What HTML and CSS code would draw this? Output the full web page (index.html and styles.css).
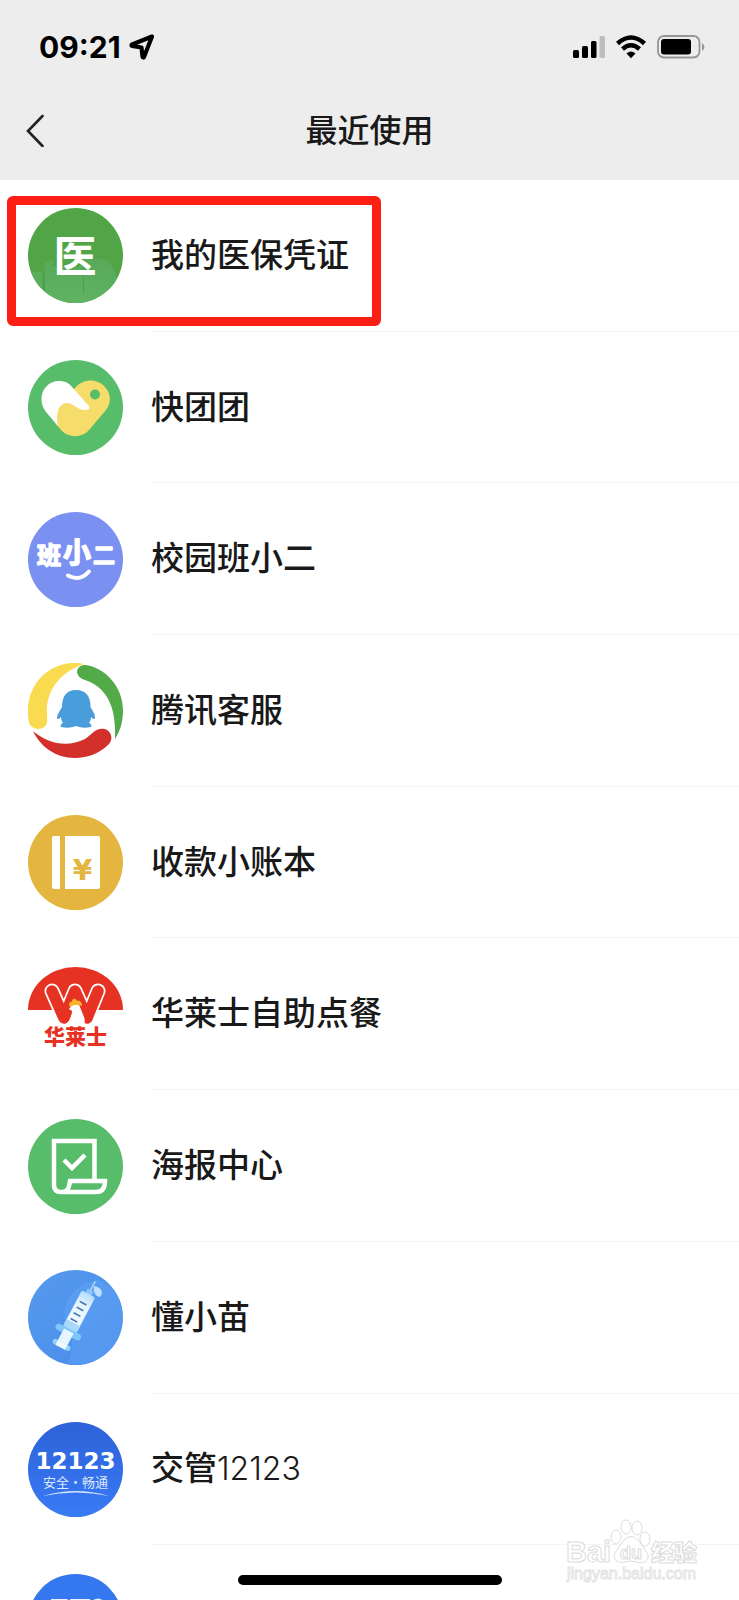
FILE: index.html
```html
<!DOCTYPE html>
<html lang="zh-CN">
<head>
<meta charset="utf-8">
<meta name="viewport" content="width=device-width, initial-scale=1">
<title>最近使用</title>
<link rel="stylesheet" href="styles.css">
</head>
<body>
<div class="screen">
  <header class="top">
    <div class="status">
      <div class="status-left">
        <span class="time">09:21</span>
        <svg class="location" width="26" height="26" viewBox="0 0 26 26" aria-hidden="true"><path d="M23 2.500 3 10.500c-.8.400-.7 1.300.1 1.400l9.400 1.600 1 9.300c.1.900 1.200 1 1.500.2z" fill="none" stroke="#000" stroke-width="4.200" stroke-linejoin="round"/></svg>
      </div>
      <div class="status-right">
        <svg width="32" height="24" viewBox="0 0 32 24" aria-hidden="true"><rect y="15" width="6" height="8" rx="1.500"/><rect x="9" y="11" width="6" height="12" rx="1.500"/><rect x="18" y="6" width="5.500" height="17" rx="1.500"/><rect x="26.500" y="1" width="5.500" height="22" rx="1.500" fill="#bdbdbd"/></svg>
        <svg width="30" height="24" viewBox="0 0 30 24" aria-hidden="true"><g fill="none" stroke="#000" stroke-width="4.500"><path d="M1.500 8.500Q15-3.500 28.500 8.500"/><path d="M6.500 14Q15 6.500 23.500 14"/></g><path d="M10.500 18.500q4.500-4 9 0L15 23.200z"/></svg>
        <svg width="48" height="24" viewBox="0 0 48 24" aria-hidden="true"><rect x="1" y="1" width="41.500" height="21.500" rx="6" fill="none" stroke="#969696" stroke-width="1.800"/><rect x="4" y="4" width="30" height="15.500" rx="3"/><path d="M45 8q5 4 0 8z" fill="#969696"/></svg>
      </div>
    </div>
    <div class="nav">
      <button class="back" type="button" aria-label="返回"><svg width="18" height="34" viewBox="0 0 18 34" aria-hidden="true"><path d="M16.500 3 2 18 16.500 33" fill="none" stroke="#222" stroke-width="2.600" stroke-linecap="round"/></svg></button>
      <h1 class="title">最近使用</h1>
    </div>
  </header>

  <main class="content">
    <ul class="list">
      <li class="row">
        <a class="link" href="#insurance">
          <svg class="icon" viewBox="0 0 95 95" aria-hidden="true">
            <defs><linearGradient id="med" x2="0" y2="1"><stop offset="0" stop-color="#58a95a"/><stop offset="1" stop-color="#5fb361"/></linearGradient><clipPath id="disc"><circle cx="47.500" cy="47.500" r="47.500"/></clipPath></defs>
            <g clip-path="url(#disc)"><rect width="95" height="95" fill="#52a547"/><path d="M0 64h14v18h3V55l8-3v6h31v-7h18l6 2 8 12v30H0z" fill="url(#med)"/><path d="M55.500 57v28M16 66v19" stroke="#4d9f4d"/></g>
            <text class="cjk bold" x="47" y="64" font-size="43" text-anchor="middle" fill="#fff">医</text>
          </svg>
          <span class="name">我的医保凭证</span>
        </a>
        <span class="highlight"></span>
      </li>
      <li class="row">
        <a class="link" href="#ktt">
          <svg class="icon" viewBox="0 0 95 95" aria-hidden="true">
            <circle cx="47.500" cy="47.500" r="47.500" fill="#57bd6a"/>
            <path d="M47 28C54 19 67 18 75 25c8 7 9 17 3 25L61 70c-7 8-20 8-27 1l-7-8 3-20z" fill="#f6dc6b"/>
            <path d="M13.500 40C13 29 21 21 31 21c6 0 10 2 13 6l16 18c3 3 1 5-3 5-9 0-12-8-19-7-7 1-11 10-8 23L18 52c-3-4-4.500-8-4.500-12z" fill="#fff"/>
            <circle cx="67" cy="34.500" r="5" fill="#57bd6a"/>
          </svg>
          <span class="name">快团团</span>
        </a>
      </li>
      <li class="row">
        <a class="link" href="#class">
          <svg class="icon" viewBox="0 0 95 95" aria-hidden="true">
            <circle cx="47.500" cy="47.500" r="47.500" fill="#7b91f2"/>
            <g class="cjk bold" fill="#fff" stroke="#fff" stroke-width="1.500" stroke-linejoin="round" text-anchor="middle"><text x="21" y="52" font-size="24">班</text><text x="49" y="51" font-size="28">小</text><text x="76" y="51" font-size="22">二</text></g>
            <path d="M40 63.500Q52 70 61 59.500" fill="none" stroke="#fff" stroke-width="4" stroke-linecap="round"/>
          </svg>
          <span class="name">校园班小二</span>
        </a>
      </li>
      <li class="row">
        <a class="link" href="#tencent">
          <svg class="icon" viewBox="0 0 95 95" aria-hidden="true">
            <path d="M56 1C28-5 0 16 0 47.500c0 4 0 8 1 12 2 8 16 9 18 0 .5-5-.5-10 0-15C20 27 32 9 56 1z" fill="#fadb50"/>
            <path d="M57 2c20 2 38 22 38 45 0 10-2 20-8 29 1-26-4-50-30-59C45 13 48 2 57 2z" fill="#52aa49"/>
            <path d="M5 68c7 15 22 27 42 27 13 0 25-5 34-14 6-7 0-17-9-15-6 1-10 7-15 10-16 8-36 6-52-8z" fill="#d4302b"/>
            <path d="M48 27c10 0 15 7 14.500 17 2 4 5 7 4.500 12-2 0-3-1-4-2 0 3-1 4-2 6 2 1 3 2 2 4-5 1-10 1-15-1-5 2-10 2-15 1-1-2 0-3 2-4-1-2-2-3-2-6-1 1-2 2-4 2 0-5 3-8 5-12C34 34 38 27 48 27z" fill="#4a9ddb"/>
          </svg>
          <span class="name">腾讯客服</span>
        </a>
      </li>
      <li class="row">
        <a class="link" href="#ledger">
          <svg class="icon" viewBox="0 0 95 95" aria-hidden="true">
            <circle cx="47.500" cy="47.500" r="47.500" fill="#e4b63f"/>
            <path d="M26 21h6v53h-6q-2 0-2-2V23q0-2 2-2zM37 21h33q2 0 2 2v49q0 2-2 2H37z" fill="#fff"/>
            <text class="wide" x="54.500" y="65" font-size="28" text-anchor="middle" fill="#e4b63f">¥</text>
          </svg>
          <span class="name">收款小账本</span>
        </a>
      </li>
      <li class="row">
        <a class="link" href="#wallace">
          <svg class="icon" viewBox="0 0 95 95" aria-hidden="true">
            <path d="M0 43a47.500 43 0 0 1 95 0z" fill="#e63223"/>
            <g fill="none" stroke-linecap="round" stroke-linejoin="round"><path d="M24 24 36 51 47 24 59 51 70 24" stroke="#fff" stroke-width="15"/><path d="M24 24 36 51 47 24 59 51 70 24" stroke="#e63223" stroke-width="11.500"/></g>
            <path d="M44 38c3-3 7-2 8 2l4 10c1 3 1 5 0 7H38c4-3 6-8 6-13l-3-2z" fill="#fff"/>
            <path d="M41 38c0-3 2-4 3-3 0-4 4-4 5-1 3-1 5 1 5 5-4-1-8-2-12 1z" fill="#f6b52d"/>
            <text class="cjk heavy" x="47.500" y="77" font-size="21" text-anchor="middle" fill="#e63223">华莱士</text>
          </svg>
          <span class="name">华莱士自助点餐</span>
        </a>
      </li>
      <li class="row">
        <a class="link" href="#poster">
          <svg class="icon" viewBox="0 0 95 95" aria-hidden="true">
            <circle cx="47.500" cy="47.500" r="47.500" fill="#57bd6a"/>
            <g fill="none" stroke="#fff" stroke-width="4.500"><path d="M66.500 62V22H26v44c0 5 3 7 7 7h35c6 0 9-4 9-11H42c-1 7-2 11-9 11"/><path d="m36 41 8 8 13-13"/></g>
          </svg>
          <span class="name">海报中心</span>
        </a>
      </li>
      <li class="row">
        <a class="link" href="#vaccine">
          <svg class="icon" viewBox="0 0 95 95" aria-hidden="true">
            <defs><linearGradient id="sky" x2="1" y2="1"><stop offset="0" stop-color="#559aed"/><stop offset="1" stop-color="#498cec"/></linearGradient><linearGradient id="glass" x2="0" y2="1"><stop offset="0" stop-color="#b5dcfb"/><stop offset=".3" stop-color="#e3f3fe"/><stop offset="1" stop-color="#f4fbff"/></linearGradient></defs>
            <circle cx="47.500" cy="47.500" r="47.500" fill="url(#sky)"/>
            <path d="M70 10c-28 3-40 30-30 48 6 12 4 24 0 36 30 4 55-18 55-46 0-15-8-32-25-38z" fill="#6eaff7" opacity=".3"/>
            <g transform="translate(51 42) rotate(28) scale(1.080)">
              <path d="M0-20v-12" stroke="#a7d7fa" stroke-width="1.500"/><rect x="-3" y="-23" width="6" height="5" fill="#8bc6fa"/>
              <rect x="-7" y="-19" width="14" height="37" rx="2" fill="url(#glass)"/><path d="M-7 11H7v7H-7z" fill="#a8d8fb"/>
              <path d="M-4-9h7M-4-3h7M-4 3h7M-4 9h7" stroke="#4774a7" stroke-width="1.500"/>
              <rect x="-13" y="18" width="26" height="6" rx="3" fill="#7fc7fa"/><rect x="-5" y="20" width="10" height="15" fill="#e6f6ff"/><rect x="-9" y="32" width="18" height="5" rx="2.500" fill="#91d1fa"/><rect x="-5" y="32" width="10" height="5" fill="#effaff"/>
            </g>
            <path d="M66 16c7 1 10 6 6 11-5-1-7-5-6-11z" fill="#bfe0fc"/>
          </svg>
          <span class="name">懂小苗</span>
        </a>
      </li>
      <li class="row">
        <a class="link" href="#traffic">
          <svg class="icon" viewBox="0 0 95 95" aria-hidden="true">
            <defs><linearGradient id="blue" x2="0" y2="1"><stop offset="0" stop-color="#2d61d8"/><stop offset="1" stop-color="#387bf5"/></linearGradient></defs>
            <circle cx="47.500" cy="47.500" r="47.500" fill="url(#blue)"/>
            <text class="wide" x="47.500" y="47" font-size="23" text-anchor="middle" fill="#fff">12123</text>
            <text class="cjk" x="47.500" y="65" font-size="13" text-anchor="middle" fill="#dce8ff">安全·畅通</text>
            <path d="M15 74Q48 64 81 74 48 67 15 74z" fill="#cfe0ff"/>
          </svg>
          <span class="name">交管<span class="number">12123</span></span>
        </a>
      </li>
      <li class="row">
        <a class="link" href="#more" aria-label="更多小程序">
          <svg class="icon" viewBox="0 0 95 95" aria-hidden="true">
            <circle cx="47.500" cy="47.500" r="47.500" fill="#3477ef"/>
            <path d="M23 25h17l-3 4H23zM42 25h20v2H42zM64 27q6-5 12 0z" fill="#e8f1ff"/>
          </svg>
        </a>
      </li>
    </ul>
  </main>

  <div class="home"></div>
  <svg class="watermark" width="140" height="68" viewBox="0 0 140 68" aria-hidden="true">
    <g fill="#fff" stroke="#dcdcdc" stroke-width="1">
      <text class="latin" x="3" y="44" font-size="29">Bai</text>
      <ellipse cx="53" cy="19" rx="5" ry="7"/><ellipse cx="63" cy="9" rx="5" ry="7"/><ellipse cx="74" cy="10" rx="5" ry="7"/><ellipse cx="82" cy="21" rx="5" ry="7"/>
      <path d="M61 22q7-7 14 0l7 10c8 9-1 15-8 12q-6-2-12 0c-8 2-15-4-8-12z"/>
      <text class="latin" x="68" y="41" font-size="18" text-anchor="middle">du</text>
      <text class="cjk heavy" x="88" y="43" font-size="23">经验</text>
      <text class="url" x="4" y="61" font-size="16">jingyan.baidu.com</text>
    </g>
  </svg>
</div>
</body>
</html>
```

FILE: styles.css
```css
* {
  box-sizing: border-box;
}

body {
  margin: 0;
  background: #fff;
  color: #191919;
  font-family: Inter, "Noto Sans CJK SC", sans-serif;
}

.screen {
  position: relative;
  display: flex;
  flex-direction: column;
  height: 100vh;
  overflow: hidden;
}

.top {
  flex: none;
  background: #ededed;
}

.status {
  display: flex;
  align-items: center;
  justify-content: space-between;
  height: 80px;
  padding: 14px 34px 0 39px;
}

.status-left {
  display: flex;
  align-items: center;
  gap: 8px;
}

.time {
  color: #000;
  font-size: 30px;
  font-weight: 700;
  line-height: 32px;
}

.status-right {
  display: flex;
  align-items: center;
  gap: 11px;
}

.nav {
  display: grid;
  grid-template-columns: 80px 1fr 80px;
  align-items: center;
  height: 100px;
}

.back {
  display: flex;
  align-items: center;
  height: 60px;
  padding: 0 0 0 26px;
  border: 0;
  background: none;
}

.title {
  margin: 0;
  padding-bottom: 4px;
  font-family: "Noto Sans CJK SC", sans-serif;
  font-size: 32px;
  font-weight: 500;
  line-height: 48px;
  text-align: center;
}

.content {
  flex: 1;
  min-height: 0;
  overflow: hidden;
}

.list {
  display: grid;
  grid-auto-rows: 1fr;
  min-height: 1517px;
  margin: 0;
  padding: 0;
  list-style: none;
}

.row {
  position: relative;
  display: grid;
}

.link {
  display: flex;
  align-items: center;
  gap: 28px;
  padding-left: 28px;
  color: inherit;
  text-decoration: none;
}

.row::after {
  position: absolute;
  right: 0;
  bottom: 0;
  left: 152px;
  height: 1px;
  background: #f4f4f4;
  content: "";
}

.icon {
  flex: none;
  width: 95px;
  height: 95px;
}

.name {
  padding-bottom: 6px;
  font-family: "Noto Sans CJK SC", sans-serif;
  font-size: 33px;
  font-weight: 500;
  line-height: 48px;
}

.number {
  font-family: Inter, sans-serif;
  font-size: 32px;
  font-weight: 300;
  line-height: 32px;
}

.highlight {
  position: absolute;
  top: 16px;
  left: 7px;
  width: 374px;
  height: 130px;
  border: 9px solid #fb2013;
  border-radius: 6px;
  pointer-events: none;
}

.cjk {
  font-family: "Noto Sans CJK SC", sans-serif;
}

.bold {
  font-weight: 700;
}

.heavy {
  font-weight: 900;
}

.wide {
  font-family: "DejaVu Sans", sans-serif;
  font-weight: 700;
}

.latin {
  font-family: "Liberation Sans", sans-serif;
  font-weight: 700;
}

.url {
  font-family: "Liberation Sans", sans-serif;
  stroke: #e4e4e4;
}

.home {
  position: absolute;
  bottom: 15px;
  left: 50%;
  width: 264px;
  height: 10px;
  margin-left: -132px;
  border-radius: 5px;
  background: #000;
}

.watermark {
  position: absolute;
  right: 36px;
  bottom: 14px;
}
```
